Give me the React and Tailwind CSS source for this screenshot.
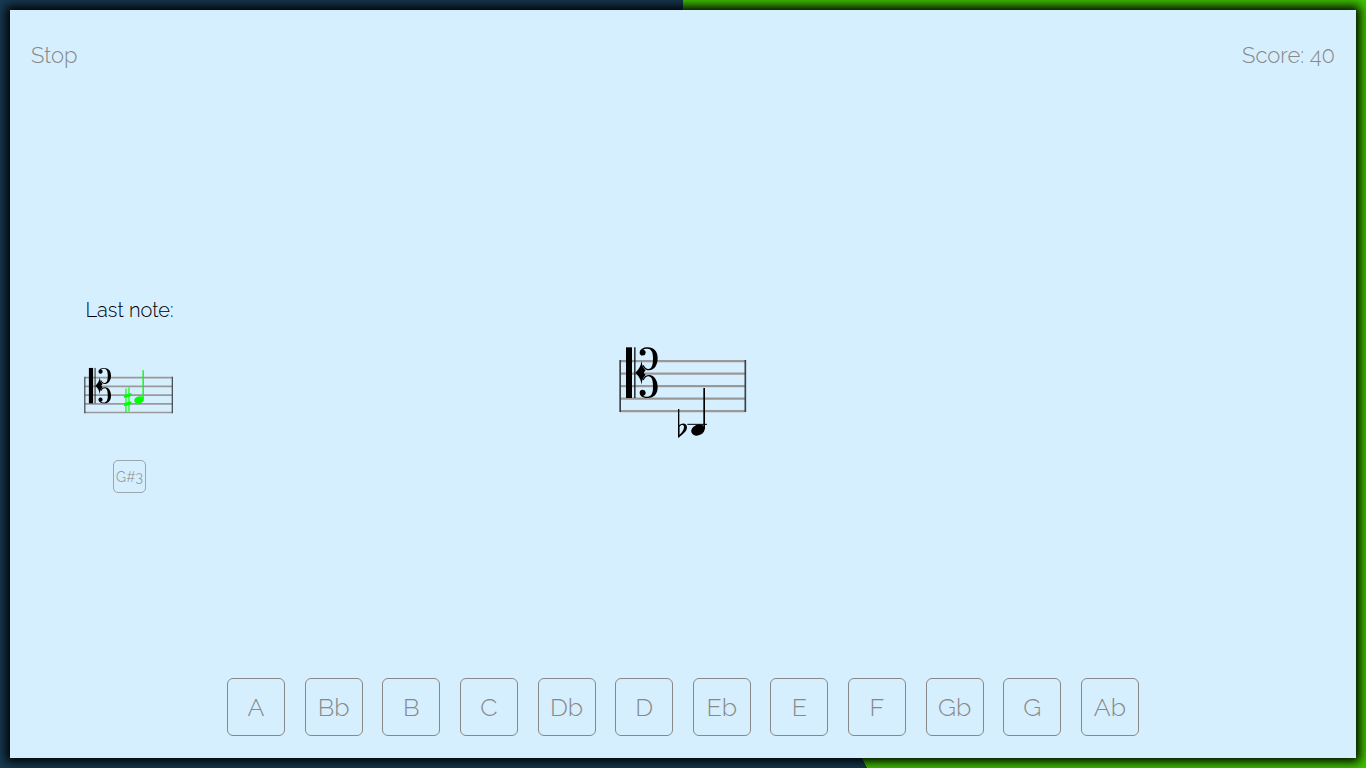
import React from "react";

const NOTES = ["A", "Bb", "B", "C", "Db", "D", "Eb", "E", "F", "Gb", "G", "Ab"];
const STAFF_LINES = [63.5, 101, 138.5, 176, 213.5];
const HOOK =
  "M89 38 C89 28 100 22 113 22 C132 22 143 34 143 55 C143 76 132 91 118 91 C108 91 102 87 98 77 L101 75 C105 83 109 87 115 87 C125 87 129 77 129 55 C129 36 124 26 112 26 C106 26 102 27 100 29 A9 9 0 1 1 89 38 Z";

function Staff({ className, label, children }) {
  return (
    <svg
      className={className}
      viewBox="27 18 381 279"
      preserveAspectRatio="xMinYMid meet"
      role="img"
      aria-label={label}
    >
      <g stroke="#999" strokeWidth="7">
        {STAFF_LINES.map((y) => (
          <path key={y} d={`M30 ${y}H406`} />
        ))}
      </g>
      <path d="M30.500 60V216M406 60V216" stroke="#3c4043" strokeWidth="5" />
      <rect x="48" y="22" width="18" height="152" />
      <path d="M74.500 22V174" stroke="#111" strokeWidth="4" />
      <path d="M95 62 C96 78 100 84 107 91 L101 98 L107 105 C100 112 96 118 95 134 C92 116 86 108 76 98 C86 88 92 80 95 62 Z" />
      <path d={HOOK} />
      <path d={HOOK} transform="matrix(1 0 0 -1 0 196)" />
      {children}
    </svg>
  );
}

export default function App() {
  return (
    <div className="h-screen bg-[conic-gradient(#40c400_154.4deg,#173a52_154.4deg)] p-[10px] font-['Raleway','Lato',sans-serif] font-light text-[#888]">
      <div className="flex h-full flex-col bg-[#d6efff] shadow-[0_0_10px_4px_#000]">
        <header className="flex h-[97px] items-start justify-between px-[21px] pt-[30px] text-[22px] leading-[30px]">
          <button type="button">Stop</button>
          <p>Score: 40</p>
        </header>

        <main className="grid flex-1 grid-cols-[1fr_auto_1fr] items-center">
          <aside className="ml-[74px] mt-[6px] flex w-[91px] flex-col items-center">
            <h2 className="whitespace-nowrap text-[20px] leading-[24px] text-black">Last note:</h2>
            <Staff className="mt-[45px] h-[65px] w-[91px]" label="Last note, G sharp 3">
              <g stroke="#0f0" fill="#0f0">
                <path d="M207 110V213M220 105V209" strokeWidth="5" />
                <path d="M198 145L231 136M198 180L231 171" strokeWidth="13" />
                <ellipse cx="263" cy="160" rx="20" ry="15" transform="rotate(-22 263 160)" />
                <path d="M281 32V156" strokeWidth="6" />
              </g>
            </Staff>
            <div className="mt-[28px] flex h-[33px] w-[33px] items-center justify-center rounded-[5px] border border-[#9aa5ad] text-[14px] leading-[20px]">
              G#3
            </div>
          </aside>
          <Staff className="h-[93px] w-[128px]" label="Note to name">
            <path d="M206 207V292" stroke="#000" strokeWidth="4" />
            <path
              fillRule="evenodd"
              d="M205 258 C212 248 231 246 231 262 C231 275 218 283 205 294 Z M208 261 L208 285 C215 278 222 270 222 261 C222 253 213 253 208 261 Z"
            />
            <ellipse cx="264" cy="270" rx="21" ry="16" transform="rotate(-24 264 270)" />
            <path d="M282.500 144V268" stroke="#000" strokeWidth="5" />
            <path d="M232 253H291" stroke="#000" strokeWidth="3" />
          </Staff>
        </main>

        <footer className="flex justify-center px-[21px] pb-[22px]">
          <div className="flex w-full max-w-[912px] justify-between">
            {NOTES.map((note) => (
              <button
                key={note}
                type="button"
                className="h-[58px] w-[58px] rounded-[6px] border border-[#888] text-[25px] leading-[30px]"
              >
                {note}
              </button>
            ))}
          </div>
        </footer>
      </div>
    </div>
  );
}
